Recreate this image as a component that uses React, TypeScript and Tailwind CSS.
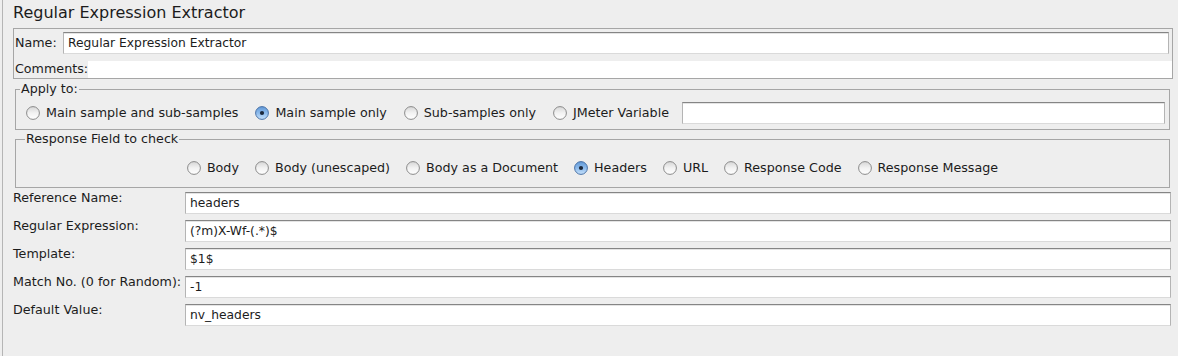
import React from 'react';

const APPLY_OPTIONS = [
  { label: 'Main sample and sub-samples', checked: false },
  { label: 'Main sample only', checked: true },
  { label: 'Sub-samples only', checked: false },
  { label: 'JMeter Variable', checked: false },
];

const FIELD_OPTIONS = [
  { label: 'Body', checked: false },
  { label: 'Body (unescaped)', checked: false },
  { label: 'Body as a Document', checked: false },
  { label: 'Headers', checked: true },
  { label: 'URL', checked: false },
  { label: 'Response Code', checked: false },
  { label: 'Response Message', checked: false },
];

const ROWS = [
  { label: 'Reference Name:', value: 'headers' },
  { label: 'Regular Expression:', value: '(?m)X-Wf-(.*)$' },
  { label: 'Template:', value: '$1$' },
  { label: 'Match No. (0 for Random):', value: '-1' },
  { label: 'Default Value:', value: 'nv_headers' },
];

function Radio({ checked }: { checked: boolean }) {
  return (
    <svg width="14" height="14" viewBox="0 0 14 14" className="shrink-0">
      <defs>
        <linearGradient id="radio-off" x1="0" y1="0" x2="0" y2="1">
          <stop offset="0" stopColor="#d6d6d6" />
          <stop offset="0.5" stopColor="#f2f2f2" />
          <stop offset="1" stopColor="#ffffff" />
        </linearGradient>
        <linearGradient id="radio-on" x1="0" y1="0" x2="0" y2="1">
          <stop offset="0" stopColor="#5f97d6" />
          <stop offset="0.5" stopColor="#8dbbec" />
          <stop offset="1" stopColor="#c6e1fb" />
        </linearGradient>
      </defs>
      <circle
        cx="7"
        cy="7"
        r="6.4"
        fill={checked ? 'url(#radio-on)' : 'url(#radio-off)'}
        stroke={checked ? '#4a72a6' : '#8a8a8a'}
        strokeWidth="1"
      />
      {checked && <circle cx="7" cy="7" r="2.1" fill="#1b273a" />}
    </svg>
  );
}

function Option({ label, checked }: { label: string; checked: boolean }) {
  return (
    <div className="flex items-center gap-[6px] whitespace-nowrap">
      <Radio checked={checked} />
      <span>{label}</span>
    </div>
  );
}

function TextField({ value, className = '' }: { value?: string; className?: string }) {
  return (
    <div
      className={`flex h-[22px] items-center border border-t-[#858585] border-x-[#b4b4b4] border-b-[#dadada] bg-white pl-[4px] text-[12.3px] shadow-[inset_0_1px_0_#e4e4e4] ${className}`}
    >
      {value}
    </div>
  );
}

export default function App() {
  return (
    <div className="h-[356px] w-[1178px] bg-[#eeeeee] pl-[2px] font-['DejaVu_Sans',sans-serif] text-[12.7px] leading-[16px] text-[#1c1c1c]">
      <div className="flex h-full flex-col border-l border-[#b5b5b5]">
        <div className="h-[28px] pl-[10px] pt-[3px] text-[16px] leading-[20px]">Regular Expression Extractor</div>

        <div className="ml-[10px] w-[1160px] border border-[#a6a6a6]">
          <div className="mt-[3px] flex h-[22px] items-center pr-[3px]">
            <span className="w-[49px] shrink-0 pl-[1px]">Name:</span>
            <TextField value="Regular Expression Extractor" className="flex-1" />
          </div>
          <div className="mt-[7px] flex h-[17px]">
            <span className="shrink-0 whitespace-nowrap pl-[1px] leading-[15px]">Comments:</span>
            <div className="flex-1 bg-white" />
          </div>
        </div>

        <fieldset className="mt-[2px] ml-[12px] w-[1155px] border border-[#a6a6a6]">
          <legend className="ml-[4px] px-[1px]">Apply to:</legend>
          <div className="mt-[5px] mb-[5px] flex items-center gap-[17px] pl-[10px] pr-[4px]">
            {APPLY_OPTIONS.map((o) => (
              <Option key={o.label} label={o.label} checked={o.checked} />
            ))}
            <TextField className="ml-[-4px] flex-1" />
          </div>
        </fieldset>

        <fieldset className="mt-[1px] ml-[12px] w-[1155px] border border-[#a6a6a6]">
          <legend className="ml-[9px] px-[1px]">Response Field to check</legend>
          <div className="mt-[13px] mb-[11px] flex items-center justify-center gap-[16px]">
            {FIELD_OPTIONS.map((o) => (
              <Option key={o.label} label={o.label} checked={o.checked} />
            ))}
          </div>
        </fieldset>

        <div className="mt-[2px] flex flex-col">
          {ROWS.map((r) => (
            <div key={r.label} className="flex h-[28px]">
              <span className="w-[182px] shrink-0 whitespace-nowrap pl-[10px]">{r.label}</span>
              <TextField value={r.value} className="mt-[2px] mr-[7px] flex-1" />
            </div>
          ))}
        </div>
      </div>
    </div>
  );
}
